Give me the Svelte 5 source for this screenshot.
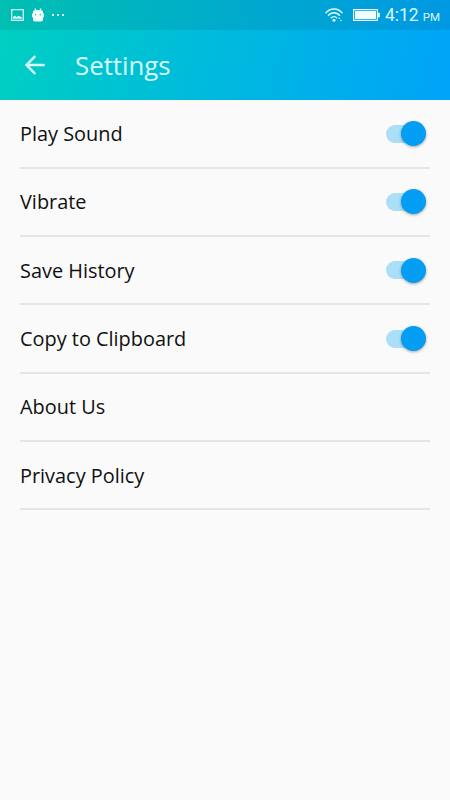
<script lang="ts">
  type Setting = {
    label: string;
    toggle: boolean;
    enabled: boolean;
  };

  let settings = $state<Setting[]>([
    { label: 'Play Sound', toggle: true, enabled: true },
    { label: 'Vibrate', toggle: true, enabled: true },
    { label: 'Save History', toggle: true, enabled: true },
    { label: 'Copy to Clipboard', toggle: true, enabled: true },
    { label: 'About Us', toggle: false, enabled: false },
    { label: 'Privacy Policy', toggle: false, enabled: false }
  ]);
</script>

<div class="screen">
  <header class="header">
    <div class="status-bar">
      <div class="notifications">
        <svg class="picture" viewBox="0 0 13 12" aria-hidden="true">
          <path d="M.7 .6h11.6v10.8H.7z" fill="none" stroke="currentColor" stroke-width="1.3" />
          <path d="M2 9.8V8l1.8-1.6L5.4 8l2.2-1.2L11 8.4v1.4z" fill="currentColor" />
        </svg>
        <svg class="robot" viewBox="0 0 12 14" aria-hidden="true">
          <path d="M3 .4l.9 2M9 .4l-.9 2" stroke="currentColor" stroke-width="1.2" />
          <path
            fill="currentColor"
            fill-rule="evenodd"
            d="M1 4.4C1 2.6 2 2 6 2s5 .6 5 2.4v1h1v3.8h-1v2.3c0 1.2-.8 2-2 2H3c-1.2 0-2-.8-2-2V9.2H0V5.4h1zM3.1 6v1.3h1.2V6zM7.7 6v1.3h1.2V6z"
          />
        </svg>
        <svg class="more" viewBox="0 0 12 2" aria-hidden="true">
          <path d="M0 0h2v2H0zM5 0h2v2H5zM10 0h2v2h-2z" fill="currentColor" />
        </svg>
      </div>
      <div class="system">
        <svg class="wifi" viewBox="0 0 18 14" aria-hidden="true">
          <g fill="none" stroke="currentColor" stroke-width="1.4">
            <path d="M.6 5.2C5.2-.4 12.8-.4 17.4 5.2" />
            <path d="M3.1 7.8c3.3-4 8.5-4 11.8 0" />
            <path d="M5.8 10.3c1.9-2.3 4.5-2.3 6.4 0" />
          </g>
          <circle cx="9" cy="12.3" r="1.5" fill="currentColor" />
          <path d="M13.2 11l1.1-1.5 1.1 1.5zM14.9 12h2.2L16 13.6z" fill="currentColor" />
        </svg>
        <svg class="battery" viewBox="0 0 27 12" aria-hidden="true">
          <path d="M.6 .6h23.8v10.8H.6z" fill="none" stroke="currentColor" stroke-width="1.1" />
          <path d="M2 2h21v8H2zM25 3.8h1.8v4.4H25z" fill="currentColor" />
        </svg>
        <span class="time">4:12<small>PM</small></span>
      </div>
    </div>
    <div class="toolbar">
      <button class="back" type="button" aria-label="Back">
        <svg viewBox="0 0 20 20" aria-hidden="true">
          <path d="M19.7 10H2M10.3 1L1.6 10l8.7 9" fill="none" stroke="currentColor" stroke-width="2.5" />
        </svg>
      </button>
      <h1>Settings</h1>
    </div>
  </header>

  <main class="list">
    {#each settings as setting (setting.label)}
      <div class="row">
        <span>{setting.label}</span>
        {#if setting.toggle}
          <button
            class="switch"
            class:on={setting.enabled}
            type="button"
            role="switch"
            aria-checked={setting.enabled}
            aria-label={setting.label}
            onclick={() => (setting.enabled = !setting.enabled)}
          >
            <span class="thumb"></span>
          </button>
        {/if}
      </div>
    {/each}
  </main>
</div>

<style>
  :global(body) {
    background: #fafafa;
  }

  .screen {
    min-height: 100vh;
    background: #fafafa;
    color: #101010;
    font-family: 'Open Sans', 'Noto Sans', sans-serif;
  }

  .header {
    height: 100px;
    background: linear-gradient(105deg, #00d0c0 0%, #00bbdc 46%, #00a3f9 100%);
    color: #d9fbff;
  }

  .status-bar {
    box-sizing: border-box;
    height: 30px;
    padding: 0 10px 0 11px;
    display: flex;
    align-items: center;
    justify-content: space-between;
    background: rgba(0, 0, 0, 0.08);
  }

  .notifications,
  .system {
    display: flex;
    align-items: center;
  }

  .picture {
    width: 13px;
    height: 12px;
  }

  .robot {
    width: 12px;
    height: 14px;
    margin: 0 8px 1px;
    color: #f2ffff;
  }

  .more {
    width: 12px;
    height: 2px;
  }

  .wifi {
    width: 18px;
    height: 14px;
    margin-right: 10px;
  }

  .battery {
    width: 27px;
    height: 12px;
    margin-right: 5px;
    color: #f0fdff;
  }

  .time {
    padding-top: 2px;
    font-family: Roboto, sans-serif;
    font-size: 17.5px;
    line-height: 28px;
  }

  .time small {
    margin-left: 4px;
    font-size: 11.5px;
  }

  .toolbar {
    height: 70px;
    display: flex;
    align-items: center;
  }

  .back {
    width: 20px;
    height: 20px;
    margin: 0 30px 0 25px;
    padding: 0;
    border: 0;
    background: none;
    color: inherit;
    cursor: pointer;
  }

  .back svg {
    display: block;
    width: 20px;
    height: 20px;
  }

  h1 {
    margin: 0;
    font-size: 25.8px;
    font-weight: 400;
    line-height: 34px;
  }

  .list {
    padding: 0.4px 20px 0;
  }

  .row {
    box-sizing: border-box;
    height: 68.35px;
    display: flex;
    align-items: center;
    justify-content: space-between;
    border-bottom: 2px solid #e5e5e5;
    font-size: 19.9px;
  }

  .switch {
    width: 40px;
    height: 18px;
    margin-right: 4px;
    padding: 0;
    display: flex;
    align-items: center;
    border: 0;
    border-radius: 9px;
    background: #c4c4c4;
    cursor: pointer;
  }

  .switch.on {
    justify-content: flex-end;
    background: #abdff8;
  }

  .thumb {
    width: 25px;
    height: 25px;
    border-radius: 50%;
    background: #f1f1f1;
    box-shadow: 0 1px 3px rgba(0, 0, 0, 0.35);
  }

  .switch.on .thumb {
    background: #039df3;
  }
</style>
